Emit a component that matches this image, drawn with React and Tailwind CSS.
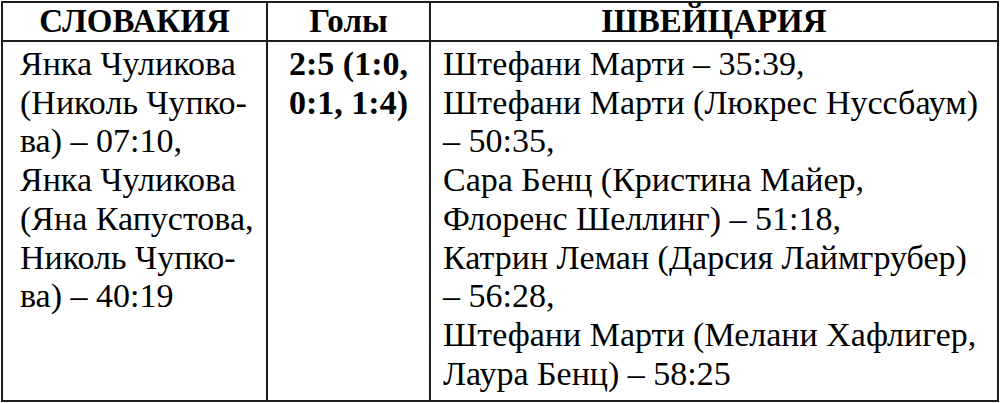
import React from 'react';

const slovakia = [
  'Янка Чуликова',
  '(Николь Чупко-',
  'ва) – 07:10,',
  'Янка Чуликова',
  '(Яна Капустова,',
  'Николь Чупко-',
  'ва) – 40:19',
];

const switzerland = [
  'Штефани Марти – 35:39,',
  'Штефани Марти (Люкрес Нуссбаум)',
  '– 50:35,',
  'Сара Бенц (Кристина Майер,',
  'Флоренс Шеллинг) – 51:18,',
  'Катрин Леман (Дарсия Лаймгрубер)',
  '– 56:28,',
  'Штефани Марти (Мелани Хафлигер,',
  'Лаура Бенц) – 58:25',
];

export default function App() {
  return (
    <div className="w-[1000px] h-[403px] bg-white text-black overflow-hidden pl-px pt-px font-['Liberation_Serif']">
      {/* Table drawn as a grid: dark background shows through gaps as borders */}
      <div className="grid grid-cols-[263px_161px_1fr] grid-rows-[37px_1fr] gap-[2px] p-[2px] bg-[#1c1c1c] w-[998px] h-[401px] font-['Liberation_Serif']">
        <div className="bg-white text-center text-[33px] leading-[37px] font-bold whitespace-nowrap font-['Liberation_Serif']">СЛОВАКИЯ</div>
        <div className="bg-white text-center text-[33px] leading-[37px] font-bold whitespace-nowrap font-['Liberation_Serif']">Голы</div>
        <div className="bg-white text-center text-[33px] leading-[37px] font-bold whitespace-nowrap font-['Liberation_Serif']">ШВЕЙЦАРИЯ</div>

        <div className="bg-white pl-[17px] pt-[3px] text-[34px] leading-[38.7px] font-['Liberation_Serif']">
          {slovakia.map((line, i) => (
            <div key={i} className="whitespace-nowrap font-['Liberation_Serif']">{line}</div>
          ))}
        </div>
        <div className="bg-white text-center pt-[3px] text-[34px] leading-[38.7px] font-bold font-['Liberation_Serif']">
          <div className="whitespace-nowrap font-['Liberation_Serif']">2:5 (1:0,</div>
          <div className="whitespace-nowrap font-['Liberation_Serif']">0:1, 1:4)</div>
        </div>
        <div className="bg-white pl-[12px] pt-[3px] text-[34px] leading-[38.7px] font-['Liberation_Serif']">
          {switzerland.map((line, i) => (
            <div key={i} className="whitespace-nowrap font-['Liberation_Serif']">{line}</div>
          ))}
        </div>
      </div>
    </div>
  );
}
